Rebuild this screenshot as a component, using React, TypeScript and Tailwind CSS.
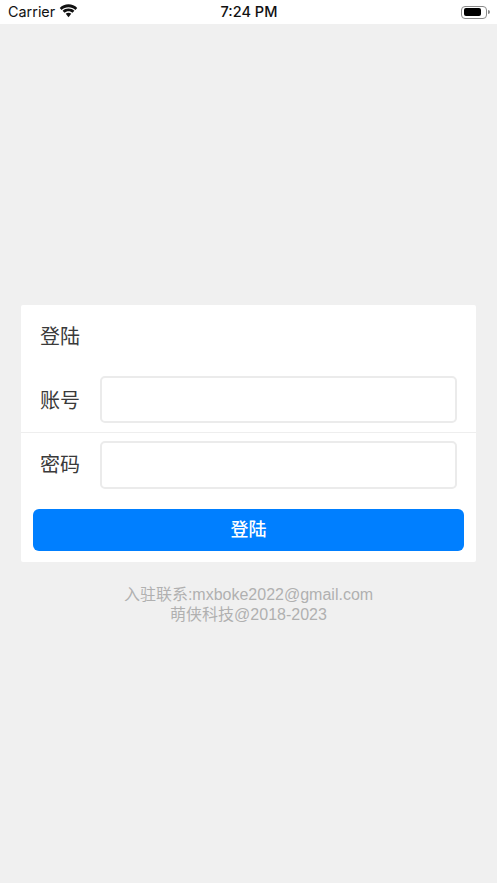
export default function App() {
  const cjk = "font-['Liberation_Sans','Noto_Sans_CJK_SC',sans-serif]";
  return (
    <div className={`min-h-[883px] bg-[#f0f0f0] ${cjk}`}>
      <div className="flex h-6 items-center justify-between bg-white pl-[8px] pr-[7px] text-[#111]">
        <div className="flex w-[120px] items-center gap-[4px]">
          <span className="font-['Inter',sans-serif] text-[14.4px] leading-none">Carrier</span>
          <svg width="19" height="14" viewBox="0 0 18 13" fill="#111" className="-mt-[3px]">
            <path d="M9 2.900c2.500 0 4.800 1 6.500 2.600l1.800-1.900C15.100 1.500 12.200.2 9 .2S2.900 1.500.7 3.600l1.800 1.900C4.200 3.900 6.500 2.900 9 2.900z" />
            <path d="M9 6.700c1.500 0 2.800.6 3.800 1.500l1.800-1.900C13.100 4.900 11.200 4.100 9 4.100s-4.100.8-5.600 2.200l1.800 1.900c1-.9 2.300-1.500 3.800-1.500z" />
            <path d="M9 8.200c-1 0-1.900.4-2.600 1L9 12.400l2.600-3.200C10.900 8.600 10 8.200 9 8.200z" />
          </svg>
        </div>
        <span className="font-['Inter',sans-serif] text-[14.5px] font-medium leading-none">7:24 PM</span>
        <div className="flex w-[120px] items-center justify-end">
          <div className="flex h-[13px] w-[26px] items-center rounded-[4px] border border-[#8a8a8a] p-[1.5px]">
            <div className="h-full w-[17px] rounded-[2px] bg-black" />
          </div>
          <div className="ml-[1px] h-[4px] w-[1.5px] rounded-r-sm bg-[#8a8a8a]" />
        </div>
      </div>

      <div className="mx-[21px] mt-[281px] rounded-[2px] bg-white">
        <div className="flex h-[60px] items-center pt-[4px] pl-[19px] text-[20px] text-[#3a3a3a]">登陆</div>
        <div className="flex h-[68px] items-center border-b border-[#eeeeee] pt-[2px] pb-[1px] pl-[19px] pr-[19px]">
          <span className="mt-[4px] w-[60px] shrink-0 text-[20px] text-[#3a3a3a]">账号</span>
          <div className="h-[47px] flex-1 rounded-[5px] border-2 border-[#ebebeb] bg-white" />
        </div>
        <div className="flex h-[64px] items-center pl-[19px] pr-[19px]">
          <span className="w-[60px] shrink-0 text-[20px] text-[#3a3a3a]">密码</span>
          <div className="h-[48px] flex-1 rounded-[5px] border-2 border-[#ebebeb] bg-white" />
        </div>
        <div className="px-[12px] pt-[12px] pb-[11px]">
          <button className="flex h-[42px] w-full items-center justify-center rounded-[6px] bg-[#007fff] text-[18px] font-medium text-white">
            登陆
          </button>
        </div>
      </div>

      <div className="mt-[23px] text-center text-[16px] leading-[20px] text-[#b0b0b0]">
        <p>入驻联系:mxboke2022@gmail.com</p>
        <p>萌侠科技@2018-2023</p>
      </div>
    </div>
  );
}
